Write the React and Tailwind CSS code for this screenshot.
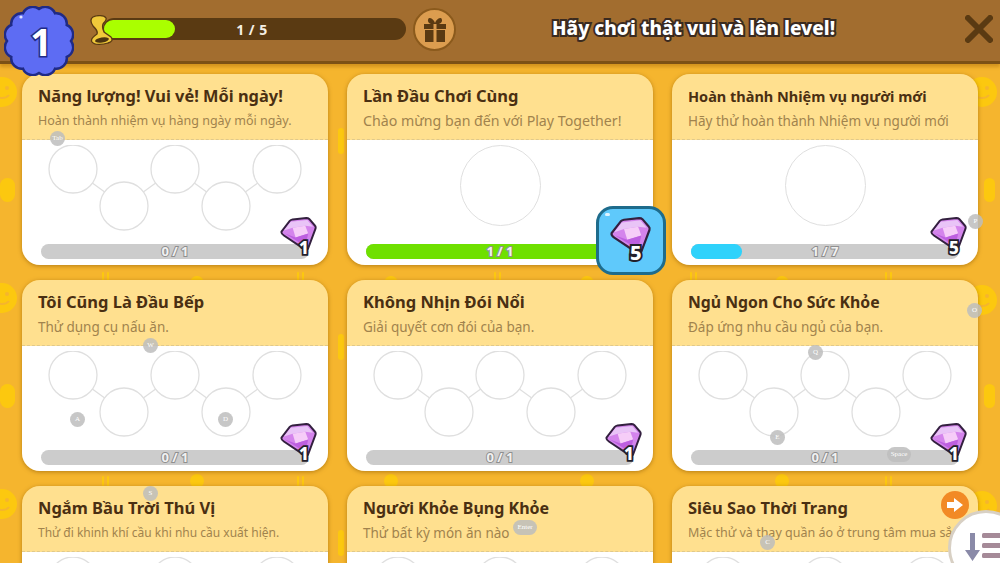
const quests = [
  { title: "Năng lượng! Vui vẻ! Mỗi ngày!", desc: "Hoàn thành nhiệm vụ hàng ngày mỗi ngày.", count: "0 / 1", reward: 1, chain: true, titleSize: "text-[16.4px]", descSize: "text-[12.5px]" },
  { title: "Lần Đầu Chơi Cùng", desc: "Chào mừng bạn đến với Play Together!", count: "1 / 1", reward: 5, fill: "w-full bg-[#6fe000]", done: true, titleSize: "text-[16.5px]", descSize: "text-[14.2px]" },
  { title: "Hoàn thành Nhiệm vụ người mới", desc: "Hãy thử hoàn thành Nhiệm vụ người mới", count: "1 / 7", reward: 5, fill: "w-[51px] bg-[#2fd2fb]", titleSize: "text-[14.5px]", descSize: "text-[13.5px]" },
  { title: "Tôi Cũng Là Đầu Bếp", desc: "Thử dụng cụ nấu ăn.", count: "0 / 1", reward: 1, chain: true, titleSize: "text-[16.5px]", descSize: "text-[13.5px]" },
  { title: "Không Nhịn Đói Nổi", desc: "Giải quyết cơn đói của bạn.", count: "0 / 1", reward: 1, chain: true, titleSize: "text-[16.5px]", descSize: "text-[13.5px]" },
  { title: "Ngủ Ngon Cho Sức Khỏe", desc: "Đáp ứng nhu cầu ngủ của bạn.", count: "0 / 1", reward: 1, chain: true, titleSize: "text-[15.8px]", descSize: "text-[13.5px]" },
  { title: "Ngắm Bầu Trời Thú Vị", desc: "Thử đi khinh khí cầu khi nhu cầu xuất hiện.", count: "0 / 1", reward: 1, chain: true, titleSize: "text-[16.5px]", descSize: "text-[12px]" },
  { title: "Người Khỏe Bụng Khỏe", desc: "Thử bất kỳ món ăn nào", count: "0 / 1", reward: 1, chain: true, titleSize: "text-[16px]", descSize: "text-[13.5px]" },
  { title: "Siêu Sao Thời Trang", desc: "Mặc thử và thay quần áo ở trung tâm mua sắm", count: "0 / 1", reward: 1, chain: true, titleSize: "text-[16.5px]", descSize: "text-[12.5px]" },
];

const hints = [
  { label: "Tab", pos: "left-[50px] top-[131px]" },
  { label: "W", pos: "left-[143px] top-[338px]" },
  { label: "A", pos: "left-[70px] top-[412px]" },
  { label: "D", pos: "left-[218px] top-[412px]" },
  { label: "S", pos: "left-[143px] top-[486px]" },
  { label: "Q", pos: "left-[808px] top-[345px]" },
  { label: "E", pos: "left-[770px] top-[430px]" },
  { label: "O", pos: "left-[967px] top-[303px]" },
  { label: "P", pos: "left-[968px] top-[214px]" },
  { label: "C", pos: "left-[760px] top-[535px]" },
];

// wallpaper pattern, repeats every 206px going down
const smileys = [
  "left-[-16px] top-[76px]", "left-[-16px] top-[282px]", "left-[-16px] top-[488px]",
  "left-[964px] top-[76px]", "left-[964px] top-[284px]", "left-[964px] top-[490px]",
];
const blobs = [
  "left-[0px] top-[178px] h-[24px] w-[15px]", "left-[0px] top-[384px] h-[24px] w-[15px]",
  "left-[984px] top-[178px] h-[24px] w-[11px]", "left-[984px] top-[384px] h-[24px] w-[11px]",
  "left-[338px] top-[128px] h-[26px] w-[6px]", "left-[338px] top-[334px] h-[26px] w-[6px]", "left-[338px] top-[530px] h-[26px] w-[6px]",
  "left-[190px] top-[276px] h-[14px] w-[14px]", "left-[384px] top-[276px] h-[14px] w-[14px]", "left-[580px] top-[276px] h-[14px] w-[14px]", "left-[775px] top-[276px] h-[14px] w-[14px]",
  "left-[190px] top-[474px] h-[14px] w-[14px]", "left-[384px] top-[474px] h-[14px] w-[14px]", "left-[580px] top-[474px] h-[14px] w-[14px]", "left-[775px] top-[474px] h-[14px] w-[14px]",
  "left-[102px] top-[272px] h-[10px] w-[2px]", "left-[107px] top-[272px] h-[10px] w-[2px]", "left-[297px] top-[272px] h-[10px] w-[2px]", "left-[302px] top-[272px] h-[10px] w-[2px]",
  "left-[494px] top-[272px] h-[10px] w-[2px]", "left-[499px] top-[272px] h-[10px] w-[2px]", "left-[690px] top-[272px] h-[10px] w-[2px]", "left-[695px] top-[272px] h-[10px] w-[2px]",
  "left-[885px] top-[272px] h-[10px] w-[2px]", "left-[890px] top-[272px] h-[10px] w-[2px]",
  "left-[102px] top-[476px] h-[10px] w-[2px]", "left-[107px] top-[476px] h-[10px] w-[2px]", "left-[297px] top-[476px] h-[10px] w-[2px]", "left-[302px] top-[476px] h-[10px] w-[2px]",
  "left-[885px] top-[476px] h-[10px] w-[2px]", "left-[890px] top-[476px] h-[10px] w-[2px]",
];

const scallop = (() => {
  const n = 12;
  const R = 32;
  const pts = Array.from({ length: n }, (_, i) => {
    const a = (i / n) * Math.PI * 2;
    return [35 + R * Math.cos(a), 35 + R * Math.sin(a)];
  });
  return `M${pts[0].join(" ")} ` + pts.slice(1).concat([pts[0]]).map((p) => `A10.5 10.5 0 0 1 ${p.join(" ")}`).join(" ") + "Z";
})();

function Smiley({ pos }) {
  return (
    <svg className={`absolute ${pos} h-[32px] w-[36px]`} viewBox="0 0 36 32">
      <circle cx="18" cy="16" r="15" fill="#fcc80f" />
      <circle cx="13" cy="12" r="2" fill="#f5b52e" />
      <circle cx="23" cy="12" r="2" fill="#f5b52e" />
      <path d="M11 19c3 4 11 4 14 0" stroke="#f5b52e" strokeWidth="2" fill="none" />
    </svg>
  );
}

function Gem({ className }) {
  return (
    <svg className={className} viewBox="0 0 38 36">
      <path d="M1.5 15 10 4q1-1 3-1.5L27 1q2 0 3 1l6 7q1 1 .5 3L29 32q-1 3-4 1L4 19q-3-2-2.5-4Z" fill="#d484ec" stroke="#33203f" strokeWidth="2" strokeLinejoin="round" />
      <path d="M4 14l7-9 17-2 6 7-8-1-13 2Z" fill="#e9c4f7" />
      <path d="M13 11l13-2 3 8-13 4Z" fill="#f6cdf8" />
      <path d="M5 17l11 4 13-4-3 13Z" fill="#bd5fe0" />
    </svg>
  );
}

function Reward({ value, boxed }) {
  if (boxed) {
    return (
      <div className="absolute left-[249px] top-[132px] h-[69px] w-[70px] rounded-[17px] border-[3px] border-[#1e6c8c] bg-[#5fc9fb]">
        <div className="absolute left-[6px] top-[4px] h-[3px] w-[5px] rounded-full bg-white/80" />
        <Gem className="absolute left-[10px] top-[8px] h-[39px] w-[43px]" />
        <span className="absolute left-[31px] top-[29px] text-[20px] font-extrabold text-white [-webkit-text-stroke:4px_#23202a] [paint-order:stroke_fill]">{value}</span>
      </div>
    );
  }
  return (
    <div className="absolute left-[258px] top-[142px] h-[42px] w-[40px]">
      <Gem className="absolute left-0 top-[1px] h-[35px] w-[37px]" />
      <span className="absolute left-[19px] top-[19px] text-[17px] font-extrabold text-white [-webkit-text-stroke:3.5px_#23202a] [paint-order:stroke_fill]">{value}</span>
    </div>
  );
}

function Chain() {
  const centers = [[51, 24], [102, 61], [153, 24], [204, 61], [255, 24]];
  return (
    <svg className="h-[90px] w-[306px]" viewBox="0 0 306 90" fill="none" stroke="#dfdfdf" strokeWidth="1.3">
      {centers.slice(1).map(([x, y], i) => (
        <line key={i} x1={centers[i][0]} y1={centers[i][1]} x2={x} y2={y} />
      ))}
      {centers.map(([x, y]) => (
        <circle key={x} cx={x} cy={y} r="24" fill="white" />
      ))}
    </svg>
  );
}

function QuestCard({ quest }) {
  return (
    <div className="relative h-[191px] w-[306px] shrink-0">
      <div className="overflow-hidden rounded-[18px] shadow-[0_1px_4px_rgba(130,80,0,0.55)]">
        <div className="h-[66px] border-b border-dashed border-[#e0c98c] bg-[#ffe08f] pl-4 pt-[9px]">
          <div className={`h-[26px] font-bold leading-[26px] text-[#4a2f12] ${quest.titleSize}`}>{quest.title}</div>
          <div className={`mt-[2px] whitespace-nowrap leading-[20px] text-[#a1834d] ${quest.descSize}`}>{quest.desc}</div>
        </div>
        <div className="flex h-[125px] flex-col items-center bg-white pt-[5px]">
          <div className="flex h-[90px] items-start justify-center">
            {quest.chain ? <Chain /> : <div className="h-[81px] w-[81px] rounded-full border border-[#dfdfdf]" />}
          </div>
          <div className="relative mt-[9px] h-[15px] w-[268px] rounded-full bg-[#cccccc]">
            {quest.fill && <div className={`h-full rounded-full ${quest.fill}`} />}
            <div className="absolute inset-0 flex items-center justify-center text-[13px] font-bold leading-none text-[#f1f1f1] [-webkit-text-stroke:2px_#8f8f8f] [paint-order:stroke_fill]">
              {quest.count}
            </div>
          </div>
        </div>
      </div>
      <Reward value={quest.reward} boxed={quest.done} />
    </div>
  );
}

function KeyHint({ label, pos, wide }) {
  return (
    <div className={`absolute ${pos} flex h-[15px] items-center justify-center rounded-full bg-[#bdbdbd]/85 font-['Liberation_Serif',serif] text-[7px] text-white ${wide ? "w-[24px]" : "w-[15px]"}`}>
      {label}
    </div>
  );
}

export default function App() {
  return (
    <div className="relative h-[563px] w-[1000px] overflow-hidden bg-[#f5b52e] font-['Noto_Sans',sans-serif]">
      {smileys.map((pos) => (
        <Smiley key={pos} pos={pos} />
      ))}
      {blobs.map((pos) => (
        <div key={pos} className={`absolute rounded-full bg-[#fcc80f] ${pos}`} />
      ))}

      {/* Header */}
      <div className="relative flex h-[64px] items-start border-b-[3px] border-[#7c5115] bg-[#a26d2f] pl-[103px] shadow-[0_3px_3px_rgba(150,90,0,0.35)]">
        <div className="relative mt-[18px] flex h-[22px] w-[303px] items-center rounded-full bg-[#5a3a12] pl-[1px]">
          <div className="h-[18px] w-[71px] rounded-full bg-[#aaff00]" />
          <span className="absolute inset-0 flex items-center justify-center pr-[5px] text-[14px] font-bold tracking-[0.5px] text-[#f5efe3]">1 / 5</span>
        </div>
        <div className="ml-[7px] mt-[8px] flex h-[43px] w-[43px] items-center justify-center rounded-full border-2 border-[#8b5a1c] bg-[#dc9d4f]">
          <svg className="h-[26px] w-[24px]" viewBox="0 0 24 26" fill="#5a3a12">
            <path d="M6 1c3 0 5 2 6 5 1-3 3-5 6-5 2 2 1 5-2 6H8C5 6 4 3 6 1Z" />
            <rect x="1" y="7" width="9.5" height="5" />
            <rect x="13.5" y="7" width="9.5" height="5" />
            <rect x="2" y="13" width="8.5" height="12" />
            <rect x="13.5" y="13" width="8.5" height="12" />
          </svg>
        </div>
        <div className="ml-[96px] mt-[14px] text-[19px] font-extrabold leading-[28px] text-white [-webkit-text-stroke:4px_#3a2a20] [paint-order:stroke_fill]">
          Hãy chơi thật vui và lên level!
        </div>
        <svg className="ml-[130px] mt-[15px] h-[28px] w-[28px]" viewBox="0 0 28 28" stroke="#5a3a12" strokeWidth="6" strokeLinecap="round">
          <path d="M3 3l22 22M25 3 3 25" />
        </svg>
      </div>

      {/* Quest grid */}
      <div className="relative grid grid-cols-[306px_306px_306px] gap-x-[19px] gap-y-[15px] pl-[22px] pt-[10px]">
        {quests.map((quest) => (
          <QuestCard key={quest.title} quest={quest} />
        ))}
      </div>

      {/* Level badge */}
      <div className="absolute left-[4px] top-[6px] h-[70px] w-[70px]">
        <svg className="h-full w-full" viewBox="0 0 70 70">
          <path d={scallop} fill="#5d6cf3" stroke="#1f2a86" strokeWidth="2.5" />
          <circle cx="17" cy="11" r="1.6" fill="#dfe3ff" />
        </svg>
        <span className="absolute inset-0 flex items-center justify-center pl-1 text-[38px] font-bold text-white [-webkit-text-stroke:3px_#1f2a86] [paint-order:stroke_fill]">1</span>
      </div>

      {/* Stamp on the progress bar */}
      <svg className="absolute left-[90px] top-[15px] h-[31px] w-[23px]" viewBox="0 0 23 31">
        <path d="M3 2c4-2 11-2 13 1 1 3-2 4-3 6-1 3 0 6 1 8l7 5c2 3 1 5-3 6-6 2-14 2-16-1-2-3 2-6 5-8 1-3-1-5-4-8C1 8 0 4 3 2Z" fill="#f0c93a" stroke="#5a3a12" strokeWidth="1.3" />
        <ellipse cx="12" cy="25" rx="7" ry="2.5" fill="#4c3410" transform="rotate(-10 12 25)" />
      </svg>

      {hints.map((hint) => (
        <KeyHint key={hint.label} {...hint} />
      ))}
      <KeyHint label="Space" pos="left-[887px] top-[447px]" wide />
      <KeyHint label="Enter" pos="left-[513px] top-[520px]" wide />

      {/* Next button */}
      <div className="absolute left-[941px] top-[491px] flex h-[28px] w-[28px] items-center justify-center rounded-full bg-[#f28a25]">
        <svg className="h-[18px] w-[18px]" viewBox="0 0 18 18" fill="white">
          <path d="M1 6h7V2l9 7-9 7v-4H1Z" />
        </svg>
      </div>

      {/* Sort button */}
      <div className="absolute left-[948px] top-[510px] flex h-[76px] w-[76px] rounded-full border-[3px] border-[#d8d0c4] bg-white pl-[13px] pt-[19px]">
        <svg className="h-[30px] w-[40px]" viewBox="0 0 40 30">
          <path d="M6 1h5v17h5L8.5 29 1 18h5Z" fill="#8a8aa8" />
          <rect x="18" y="1" width="22" height="5" rx="1.5" fill="#a58a98" />
          <rect x="18" y="11" width="22" height="5" rx="1.5" fill="#a58a98" />
          <rect x="18" y="21" width="22" height="5" rx="1.5" fill="#a58a98" />
        </svg>
      </div>
    </div>
  );
}
